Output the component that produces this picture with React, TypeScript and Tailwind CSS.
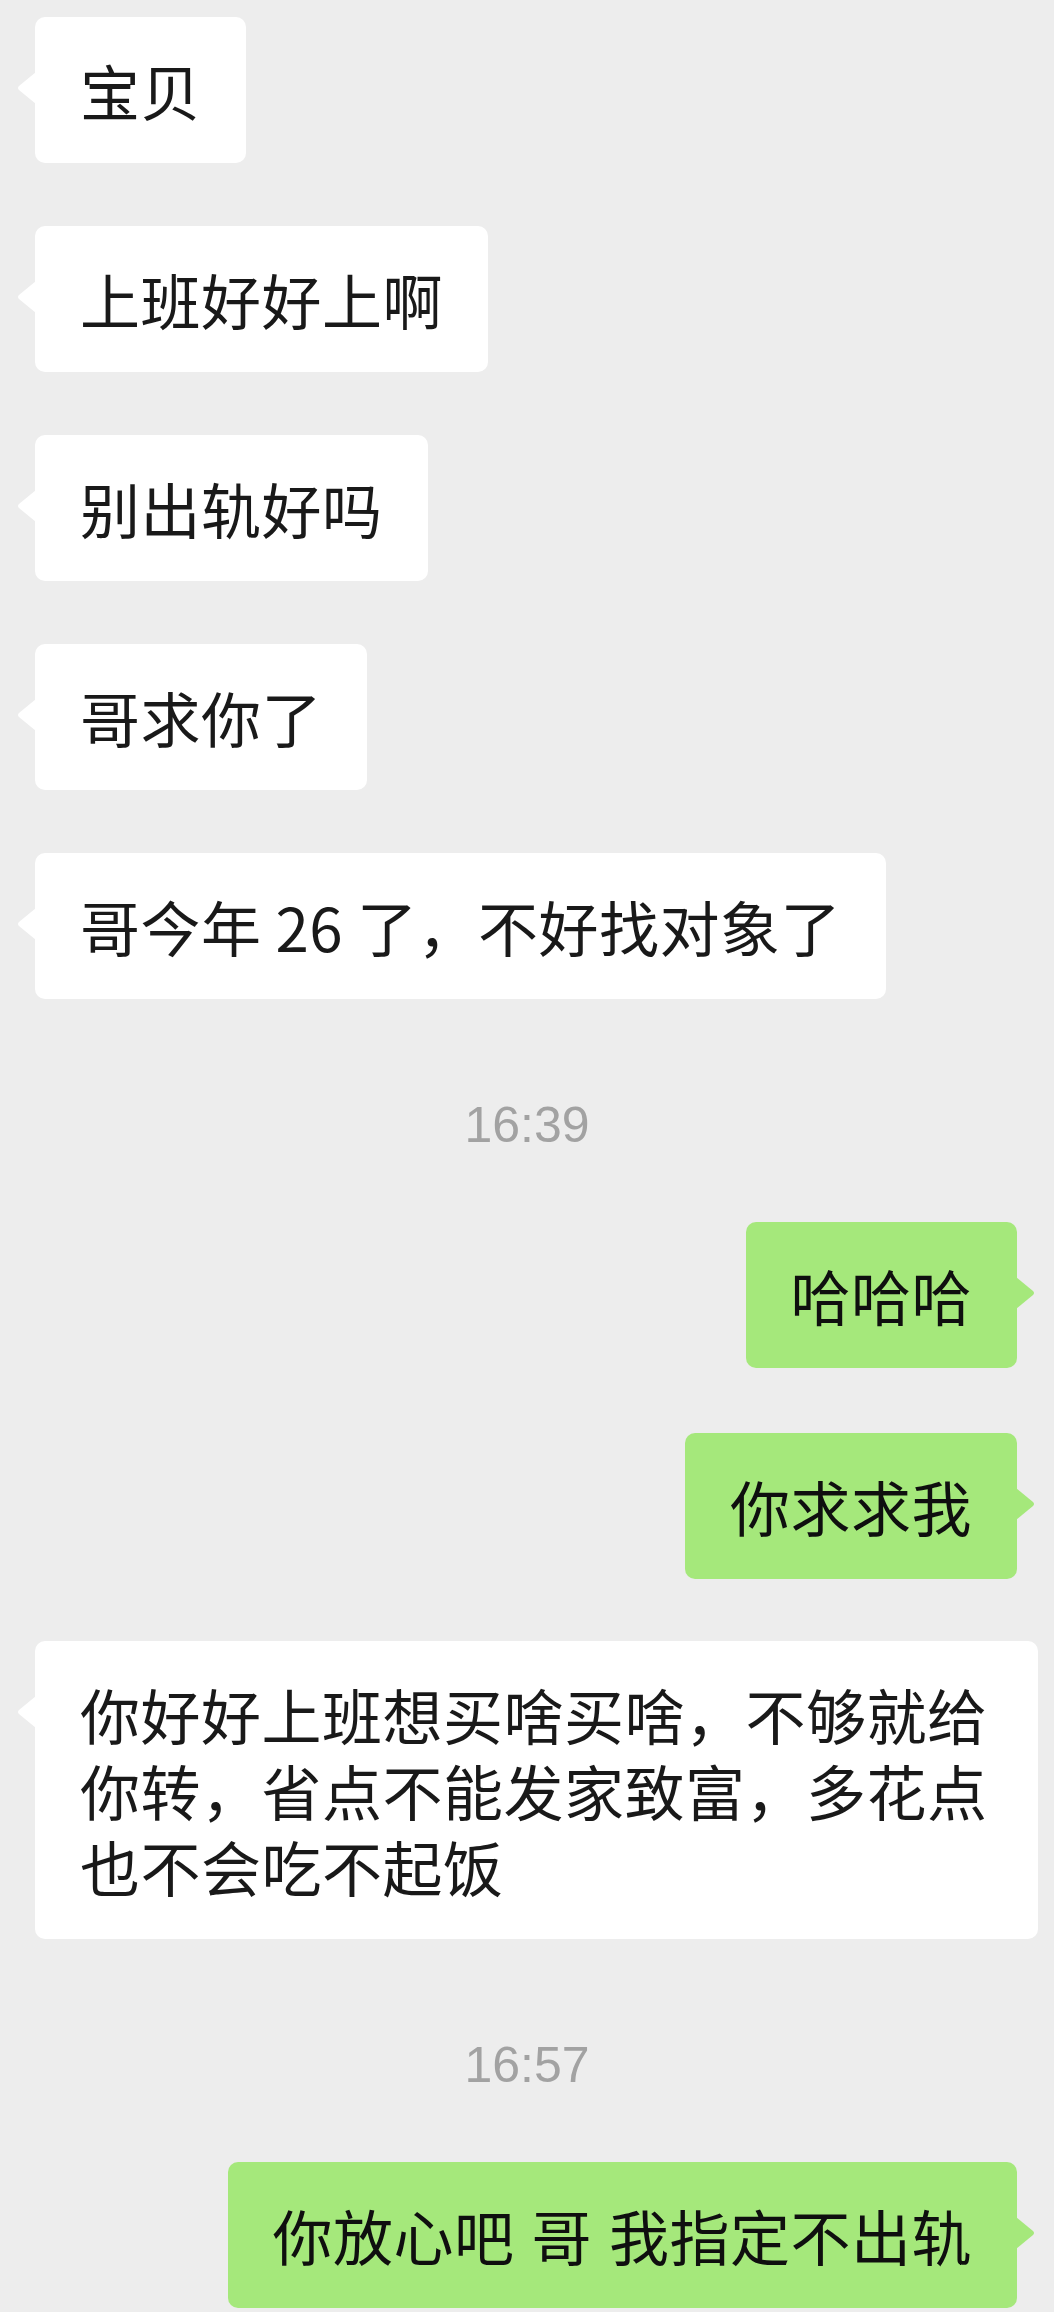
type Msg =
  | { kind: "in"; text: string; mt: string }
  | { kind: "out"; text: string; mt: string }
  | { kind: "time"; text: string; mt: string };

const messages: Msg[] = [
  { kind: "in", text: "宝贝", mt: "mt-[17px]" },
  { kind: "in", text: "上班好好上啊", mt: "mt-[63px]" },
  { kind: "in", text: "别出轨好吗", mt: "mt-[63px]" },
  { kind: "in", text: "哥求你了", mt: "mt-[63px]" },
  { kind: "in", text: "哥今年 26 了，不好找对象了", mt: "mt-[63px]" },
  { kind: "time", text: "16:39", mt: "mt-[101px]" },
  { kind: "out", text: "哈哈哈", mt: "mt-[72px]" },
  { kind: "out", text: "你求求我", mt: "mt-[65px]" },
  {
    kind: "in",
    text: "你好好上班想买啥买啥，不够就给你转，省点不能发家致富，多花点也不会吃不起饭",
    mt: "mt-[62px]",
  },
  { kind: "time", text: "16:57", mt: "mt-[101px]" },
  { kind: "out", text: "你放心吧 哥 我指定不出轨", mt: "mt-[72px]" },
];

function Tail({ side, color }: { side: "left" | "right"; color: string }) {
  // little arrow on the bubble edge
  return side === "left" ? (
    <svg
      className="absolute left-[-18px] top-[55px]"
      width="19"
      height="32"
      viewBox="0 0 19 32"
    >
      <path d="M19 0 L2 14 Q0 16 2 18 L19 32 Z" fill={color} />
    </svg>
  ) : (
    <svg
      className="absolute right-[-18px] top-[55px]"
      width="19"
      height="32"
      viewBox="0 0 19 32"
    >
      <path d="M0 0 L17 14 Q19 16 17 18 L0 32 Z" fill={color} />
    </svg>
  );
}

export default function App() {
  return (
    <main
      className="min-h-screen w-[1054px] bg-[#ededed] pb-[4px] text-[#191919]"
      style={{ fontFamily: '"Noto Sans CJK SC", "Noto Sans", sans-serif' }}
    >
      <div className="flex flex-col">
        {messages.map((m, i) => {
          if (m.kind === "time") {
            return (
              <p
                key={i}
                className={`${m.mt} text-center text-[50px] leading-[50px] text-[#a2a2a2]`}
                style={{ fontFamily: '"Liberation Sans", Arial, sans-serif' }}
              >
                {m.text}
              </p>
            );
          }
          if (m.kind === "in") {
            return (
              <div key={i} className={`${m.mt} flex pl-[35px] pr-[16px]`}>
                <div className="relative max-w-[1003px] rounded-[10px] bg-white px-[45px] py-[35px] text-[60px] leading-[76px] tracking-[0.5px]">
                  <Tail side="left" color="#ffffff" />
                  {m.text}
                </div>
              </div>
            );
          }
          return (
            <div key={i} className={`${m.mt} flex justify-end pr-[37px]`}>
              <div className="relative rounded-[10px] bg-[#a5e87b] px-[45px] py-[35px] text-[60px] leading-[76px] tracking-[0.5px] text-[#0f0f0f] [word-spacing:3px]">
                <Tail side="right" color="#a5e87b" />
                {m.text}
              </div>
            </div>
          );
        })}
      </div>
    </main>
  );
}
